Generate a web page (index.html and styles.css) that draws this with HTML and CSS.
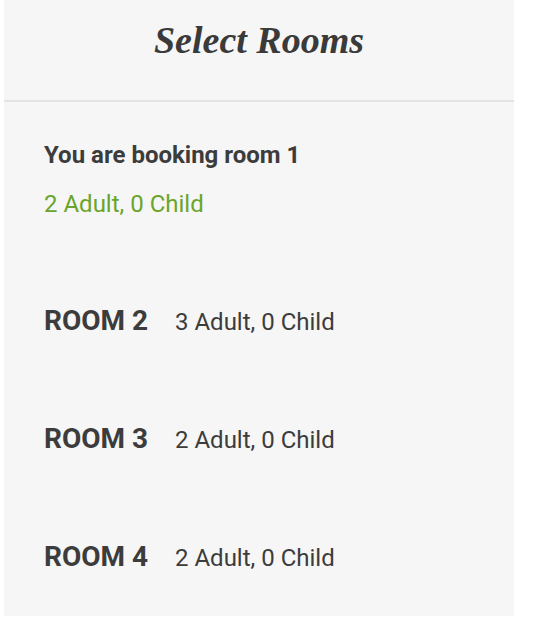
FILE: index.html
```html
<!DOCTYPE html>
<html>
<head>
<meta charset="utf-8">
<link rel="stylesheet" href="styles.css">
</head>
<body>
<div class="panel">
  <header class="head"><h1 class="title">Select Rooms</h1></header>
  <section class="current">
    <div class="booking">You are booking room 1</div>
    <div class="guests">2 Adult, 0 Child</div>
  </section>
  <ul class="rooms">
    <li class="room"><span class="room-name">ROOM 2</span><span class="room-guests">3 Adult, 0 Child</span></li>
    <li class="room"><span class="room-name">ROOM 3</span><span class="room-guests">2 Adult, 0 Child</span></li>
    <li class="room"><span class="room-name">ROOM 4</span><span class="room-guests">2 Adult, 0 Child</span></li>
  </ul>
</div>
</body>
</html>
```
FILE: styles.css
```css
html, body { margin: 0; padding: 0; background: #ffffff; }
body { padding-left: 4px; font-family: Roboto, "Liberation Sans", sans-serif; color: #3c3c3c; }
.panel { width: 510px; height: 616px; background: #f6f6f6; }
.head { height: 100px; border-bottom: 2px solid #e4e4e4; display: flex; justify-content: center; }
.title { margin: 17px 0 0; font-family: "Liberation Serif", serif; font-style: italic; font-weight: 700; font-size: 38px; line-height: 46px; color: #3a3a3a; }
.current { padding: 38px 0 0 40px; }
.booking { font-weight: 700; font-size: 24px; line-height: 30px; }
.guests { margin-top: 19px; color: #6aa52a; font-size: 24px; line-height: 30px; }
.rooms { list-style: none; margin: 0; padding: 87px 0 0 40px; }
.room { display: flex; align-items: baseline; height: 118px; }
.room-name { font-weight: 700; font-size: 28px; line-height: 30px; width: 131px; }
.room-guests { font-size: 24px; line-height: 30px; }
```
